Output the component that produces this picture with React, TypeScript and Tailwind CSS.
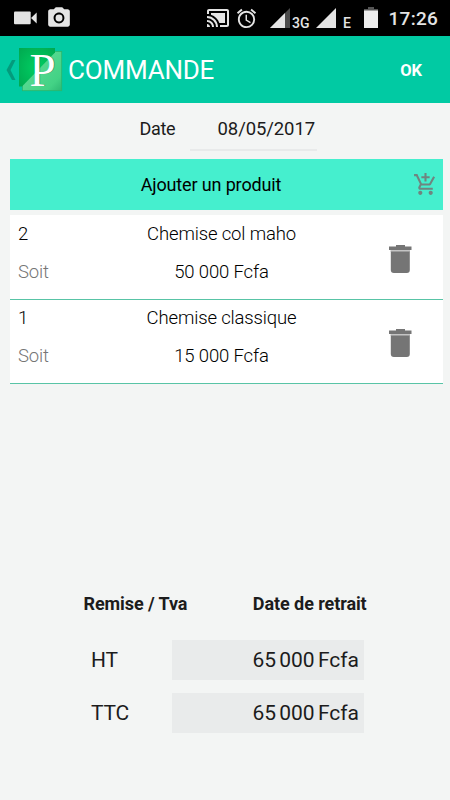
import { MdAddShoppingCart, MdAlarm, MdCastConnected, MdPhotoCamera } from 'react-icons/md';

// --- Types ---
type OrderLine = {
  id: string;
  quantity: number;
  product: string;
  price: string;
};

// --- Data ---
const orderLines: OrderLine[] = [
  { id: 'maho', quantity: 2, product: 'Chemise col maho', price: '50 000 Fcfa' },
  { id: 'classique', quantity: 1, product: 'Chemise classique', price: '15 000 Fcfa' },
];

const totals = [
  { label: 'HT', amount: '65 000 Fcfa' },
  { label: 'TTC', amount: '65 000 Fcfa' },
];

function Logo() {
  return (
    <svg className="h-[44px] w-[44px] overflow-visible" viewBox="0 0 44 44">
      <defs>
        <radialGradient id="back" cx="0.5" cy="0.5" r="0.75">
          <stop offset="0.2" stopColor="#00c75f" />
          <stop offset="1" stopColor="#00a64e" />
        </radialGradient>
        <linearGradient id="front" x1="0" y1="0" x2="1" y2="1">
          <stop offset="0" stopColor="#3fc583" />
          <stop offset="0.4" stopColor="#55d890" />
          <stop offset="0.8" stopColor="#43d285" />
          <stop offset="1" stopColor="#2eb873" />
        </linearGradient>
      </defs>
      <rect x="3.5" y="3.5" width="39.2" height="39.2" fill="url(#front)" stroke="#2cb56c" strokeWidth="0.8" />
      <path d="M0 0H36V4.5L3 38.5H0Z" fill="url(#back)" />
      <text x="11.3" y="38.2" fontFamily="Liberation Serif, serif" fontSize="47" fill="#0b5b33" opacity="0.6">P</text>
      <text x="10.6" y="37.5" fontFamily="Liberation Serif, serif" fontSize="47" fill="#fff">P</text>
    </svg>
  );
}

function TrashIcon() {
  return (
    <svg className="ml-[35px] mt-[3px] h-[28px] w-[23px]" viewBox="0 0 23 28">
      <path d="M7 0H16V1.5H22.5V5H0V1.5H7Z" fill="#757575" />
      <path d="M1.5 5H21V7H1.5Z" fill="#c4c4c4" />
      <path d="M1.8 6.5H20.8V25Q20.8 28 17.8 28H4.8Q1.8 28 1.8 25Z" fill="#757575" />
    </svg>
  );
}

function StatusBar() {
  return (
    <div className="flex h-[36px] shrink-0 items-center bg-black text-[#e4e4e4]">
      <svg className="ml-[14px] h-[14px] w-[23px] shrink-0" viewBox="0 0 23 14">
        <rect y="0.5" width="16.7" height="12.8" rx="1" fill="currentColor" />
        <path d="M17 7L22.7 1.5V12.5Z" fill="currentColor" />
      </svg>
      <MdPhotoCamera className="ml-[9px] h-[26px] w-[26px] shrink-0" />
      <MdCastConnected className="ml-[134px] h-[24px] w-[24px] shrink-0" />
      <MdAlarm className="ml-[5px] h-[23px] w-[23px] shrink-0" />
      <svg className="ml-[12px] h-[20px] w-[20px] shrink-0" viewBox="0 0 20 20">
        <path d="M20 0V20H0Z" fill="#4b4b4b" />
        <path d="M15 5V20H0Z" fill="currentColor" />
      </svg>
      <span className="ml-[2px] mt-[10px] w-[20px] text-[14px] leading-[14px] font-medium">3G</span>
      <svg className="ml-[4px] h-[20px] w-[20px] shrink-0" viewBox="0 0 20 20">
        <path d="M20 0V20H0Z" fill="currentColor" />
      </svg>
      <span className="ml-[7px] mt-[10px] w-[10px] text-[14px] leading-[14px] font-medium">E</span>
      <svg className="ml-[11px] mb-[2px] h-[21px] w-[14px] shrink-0" viewBox="0 0 14 21">
        <path d="M4 0h6v2h4v2H0V2h4Z" fill="#555" />
        <rect y="3.5" width="14" height="17.5" fill="#ededed" />
      </svg>
      <span className="ml-[10.5px] mt-px text-[19px] leading-[24px] font-medium tracking-[0.3px]">17:26</span>
    </div>
  );
}

export default function App() {
  return (
    <div className="flex h-[800px] w-[450px] flex-col overflow-hidden bg-[#f3f5f4] font-['Roboto',sans-serif] text-[#1c1c1c]">
      <StatusBar />

      {/* Action bar */}
      <header className="flex h-[67px] shrink-0 items-center bg-[#01caa3] text-white">
        <svg className="ml-[6px] h-[20px] w-[10px]" viewBox="0 0 10 20">
          <path d="M6 0H9.5L4.5 10L9.5 20H6L0.5 10Z" fill="#039b7c" />
        </svg>
        <div className="ml-[3px]">
          <Logo />
        </div>
        <h1 className="ml-[5px] text-[26px] leading-[32px] tracking-[-0.2px]">COMMANDE</h1>
        <button className="ml-auto mr-[28px] mt-[2px] text-[16.5px] leading-[20px] font-bold">OK</button>
      </header>

      {/* Order date */}
      <div className="flex h-[48px] shrink-0 pl-[139.5px]">
        <span className="w-[50.5px] pt-[14px] text-[18px] leading-[24px] tracking-[-0.3px]">Date</span>
        <span className="w-[127px] border-b-2 border-[#e8eaea] pr-[2px] pt-[14px] text-right text-[18.5px] leading-[24px] tracking-[-0.1px]">
          08/05/2017
        </span>
      </div>

      <main className="ml-[9.5px] mr-[7.5px] mt-[8px] flex flex-col">
        <button className="flex h-[51px] items-center bg-[#45efce] text-black">
          <span className="flex-1 text-center text-[18px] leading-[24px] tracking-[-0.15px]">Ajouter un produit</span>
          <MdAddShoppingCart className="mr-[5px] h-[25px] w-[25px] text-[#6f8580]" />
        </button>

        <ul className="mt-[5px] text-black">
          {orderLines.map((line) => (
            <li
              key={line.id}
              className="group flex h-[84px] items-center border-b border-[#58c4a6] bg-white text-[18.5px] leading-[24px] font-light tracking-[-0.15px] first:h-[85px]"
            >
              <div className="flex h-full w-[80px] flex-col gap-[14px] pl-[8.5px] pt-[6px] group-first:pt-[7px]">
                <span>{line.quantity}</span>
                <span className="text-[#757575]">Soit</span>
              </div>
              <div className="flex h-full w-[264px] flex-col gap-[14px] pt-[6px] text-center group-first:pt-[7px]">
                <span>{line.product}</span>
                <span>{line.price}</span>
              </div>
              <TrashIcon />
            </li>
          ))}
        </ul>
      </main>

      {/* Discount / pickup date */}
      <div className="mt-auto flex gap-[65.5px] pl-[83.5px] text-[18px] leading-[24px] font-bold tracking-[-0.08px]">
        <span>Remise / Tva</span>
        <span>Date de retrait</span>
      </div>

      <div className="mt-[24px] mb-[67px] flex flex-col gap-[13px] pl-[91px] text-[21px]">
        {totals.map((total) => (
          <div key={total.label} className="flex h-[40px]">
            <span className="w-[80.5px] leading-[41px] tracking-[-0.2px]">{total.label}</span>
            <span className="h-full w-[192.5px] bg-[#e9ebeb] pr-[5px] text-right leading-[41px] [word-spacing:-2px]">
              {total.amount}
            </span>
          </div>
        ))}
      </div>
    </div>
  );
}
